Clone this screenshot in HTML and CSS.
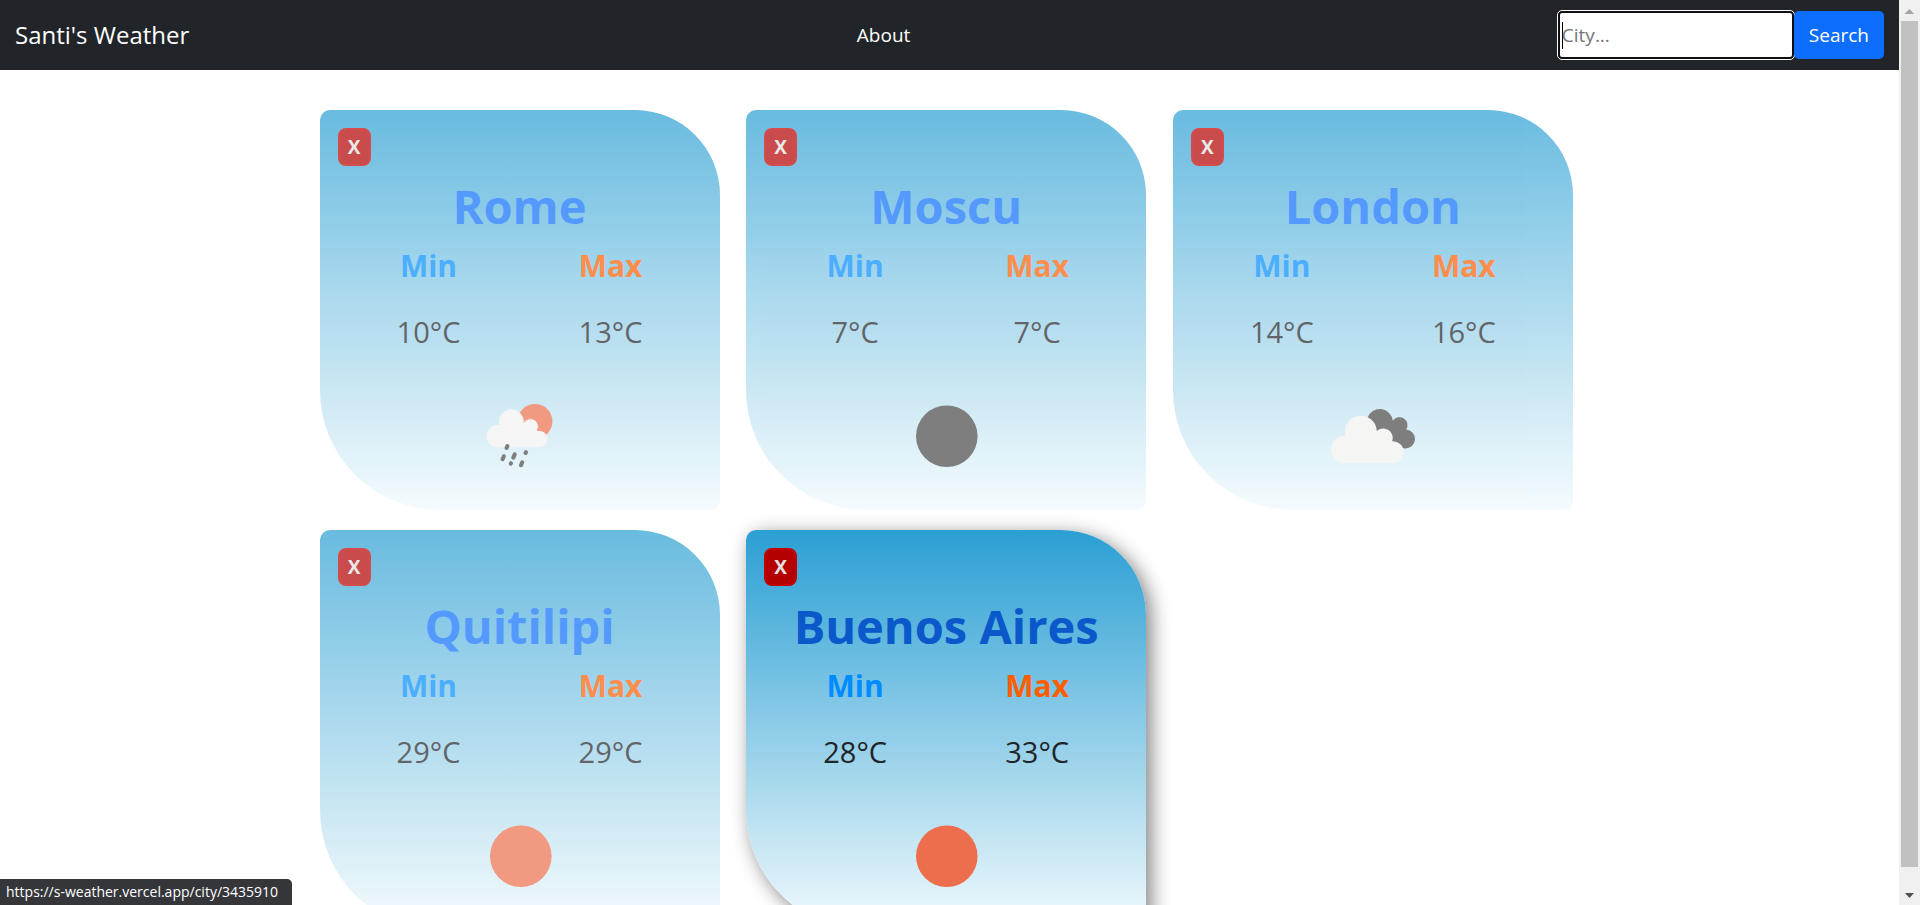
FILE: index.html
```html
<!DOCTYPE html>
<html lang="en">
<head>
<meta charset="utf-8">
<title>Santi's Weather</title>
<link rel="stylesheet" href="styles.css">
</head>
<body>
<div class="window">
  <div class="page">
    <header class="navbar">
      <a class="brand" href="#">Santi's Weather</a>
      <a class="nav-link" href="#about">About</a>
      <form class="search">
        <input class="search-input" type="text" placeholder="City..." aria-label="City">
        <button class="search-button" type="submit">Search</button>
      </form>
    </header>
    <main class="cards">
      <article class="card">
        <button class="close" type="button" aria-label="Remove Rome">X</button>
        <h2 class="city"><a href="#rome">Rome</a></h2>
        <dl class="temps">
          <div class="temp"><dt class="min">Min</dt><dd>10°C</dd></div>
          <div class="temp"><dt class="max">Max</dt><dd>13°C</dd></div>
        </dl>
        <svg class="icon" viewBox="0 0 100 100" aria-hidden="true">
          <circle cx="65" cy="35.4" r="17.4" fill="#ec6e4c"/>
          <path fill="#f2f2f2" stroke="#f2f2f2" stroke-width=".6" d="M28 61A11 11 0 1 1 30 39.2A12 12 0 1 1 53.4 36.8A7.5 7.5 0 0 1 67.2 44.6A8.3 8.3 0 1 1 68.8 61Z"/>
          <path d="M54 36.6A7.6 7.6 0 0 1 67.4 44.3Q73 44 76.4 48" fill="none" stroke="#ea5c3c" stroke-width=".8"/>
          <path d="M37.4 60L36.6 62M33.8 70.2L32.6 73.2M44.7 68.4L43.3 71.6M56 66.2L55.6 67M41 77.2L40.8 77.6M52.2 76.4L51 79.2" stroke="#484849" stroke-width="4" stroke-linecap="round"/>
        </svg>
      </article>
      <article class="card">
        <button class="close" type="button" aria-label="Remove Moscu">X</button>
        <h2 class="city"><a href="#moscu">Moscu</a></h2>
        <dl class="temps">
          <div class="temp"><dt class="min">Min</dt><dd>7°C</dd></div>
          <div class="temp"><dt class="max">Max</dt><dd>7°C</dd></div>
        </dl>
        <svg class="icon" viewBox="0 0 100 100" aria-hidden="true"><circle cx="50.8" cy="50.2" r="30.8" fill="#484849"/></svg>
      </article>
      <article class="card">
        <button class="close" type="button" aria-label="Remove London">X</button>
        <h2 class="city"><a href="#london">London</a></h2>
        <dl class="temps">
          <div class="temp"><dt class="min">Min</dt><dd>14°C</dd></div>
          <div class="temp"><dt class="max">Max</dt><dd>16°C</dd></div>
        </dl>
        <svg class="icon" viewBox="0 0 100 100" aria-hidden="true">
          <path fill="#484849" d="M44.5 32A13 13 0 0 1 69.8 34.8A7.7 7.7 0 0 1 83.2 43.6A9.4 9.4 0 1 1 82 62.4L60 58Z"/>
          <path fill="#f2f2f0" d="M20.5 77A13.5 13.5 0 1 1 22.4 50A16 16 0 1 1 53.8 45A9.5 9.5 0 0 1 69.2 55.2A10.9 10.9 0 1 1 70.5 77Z"/>
        </svg>
      </article>
      <article class="card">
        <button class="close" type="button" aria-label="Remove Quitilipi">X</button>
        <h2 class="city"><a href="#quitilipi">Quitilipi</a></h2>
        <dl class="temps">
          <div class="temp"><dt class="min">Min</dt><dd>29°C</dd></div>
          <div class="temp"><dt class="max">Max</dt><dd>29°C</dd></div>
        </dl>
        <svg class="icon" viewBox="0 0 100 100" aria-hidden="true"><circle cx="50.8" cy="50.2" r="30.8" fill="#ec6e4c"/></svg>
      </article>
      <article class="card card-active">
        <button class="close" type="button" aria-label="Remove Buenos Aires">X</button>
        <h2 class="city"><a href="#buenos-aires">Buenos Aires</a></h2>
        <dl class="temps">
          <div class="temp"><dt class="min">Min</dt><dd>28°C</dd></div>
          <div class="temp"><dt class="max">Max</dt><dd>33°C</dd></div>
        </dl>
        <svg class="icon" viewBox="0 0 100 100" aria-hidden="true"><circle cx="50.8" cy="50.2" r="30.8" fill="#ec6e4c"/></svg>
      </article>
    </main>
  </div>
  <div class="scrollbar" aria-hidden="true">
    <svg class="arrow" viewBox="0 0 21 21"><path d="M5.5 14L10.5 9L15 14Z" fill="#a3a3a3"/></svg>
    <div class="track"><div class="thumb"></div></div>
    <svg class="arrow" viewBox="0 0 21 21"><path d="M6 9H15L10.5 14Z" fill="#505050"/></svg>
  </div>
  <div class="status">https://s-weather.vercel.app/city/3435910</div>
</div>
</body>
</html>
```
FILE: styles.css
```css
* {
  box-sizing: border-box;
}

body {
  margin: 0;
  background: #fff;
  color: #212529;
  font-family: "Open Sans", "Noto Sans", sans-serif;
  font-size: 19px;
  line-height: 30px;
}

a {
  color: inherit;
  text-decoration: none;
}

.window {
  display: flex;
  height: 100vh;
  overflow: hidden;
}

.page {
  flex: 1;
  min-width: 0;
  overflow: hidden;
}

.navbar {
  display: flex;
  align-items: center;
  justify-content: space-between;
  padding: 11px 15px;
  background: #212529;
  color: #fff;
}

.brand {
  margin-right: 20px;
  font-size: 24px;
  line-height: 32px;
}

.search {
  display: flex;
}

.search-input {
  width: 236px;
  height: 48px;
  padding: 0 2px;
  border: 2px solid #101010;
  border-radius: 4px;
  outline: 1px solid #fff;
  background: #fff linear-gradient(#000, #000) 2px center / 1px 27px no-repeat;
  font: inherit;
}

.search-input::placeholder {
  color: #757575;
}

.search-button {
  height: 48px;
  padding: 0 15px;
  border: 0;
  border-radius: 5px;
  background: #0d6efd;
  color: #fff;
  font: inherit;
}

.cards {
  display: grid;
  grid-template-columns: repeat(3, 1fr);
  max-width: 1280px;
  margin: 0 auto;
  padding-top: 30px;
}

.card {
  display: flex;
  flex-direction: column;
  width: 400px;
  min-height: 400px;
  margin: 10px;
  padding: 18px;
  border-radius: 10px 85px 10px 120px;
  background: linear-gradient(#2a9fd3, #8bcbe8 48%, #a9d9ec 64%, #f1fafe);
  opacity: 0.7;
}

.card-active {
  box-shadow: 5px 5px 20px #808080;
  opacity: 1;
}

.close {
  align-self: flex-start;
  width: 33px;
  height: 38px;
  padding: 0;
  border: 2px solid #c40000;
  border-radius: 8px;
  background: #b40000;
  color: #e0e0e0;
  font: inherit;
  font-weight: 700;
}

.city {
  margin: 10px 0 12px;
  color: #0d6efd;
  font-size: 47px;
  font-weight: 700;
  line-height: 60px;
  text-align: center;
}

.card-active .city {
  color: #0a58ca;
}

.temps {
  display: flex;
  justify-content: center;
  margin: 0 0 32px;
  font-size: 30px;
  text-align: center;
}

.temp {
  width: 182px;
}

.temp dt {
  margin-bottom: 25px;
  font-weight: 700;
  line-height: 36px;
}

.temp dd {
  margin: 0;
  font-size: 29px;
  line-height: 45px;
}

.min {
  color: #008cff;
}

.max {
  color: #ff5e00;
}

.icon {
  align-self: center;
  width: 100px;
  height: 100px;
}

.scrollbar {
  display: flex;
  flex-direction: column;
  width: 21px;
  background: #f0f0f0;
}

.arrow {
  width: 21px;
  height: 21px;
}

.track {
  flex: 1;
  padding: 0 2px;
}

.thumb {
  height: 98%;
  background: #c1c1c1;
}

.status {
  position: absolute;
  bottom: 0;
  left: 0;
  padding: 0 14px 0 6px;
  border-radius: 0 5px 0 0;
  background: #35363a;
  color: #fff;
  font-size: 14px;
  line-height: 26px;
}
```
